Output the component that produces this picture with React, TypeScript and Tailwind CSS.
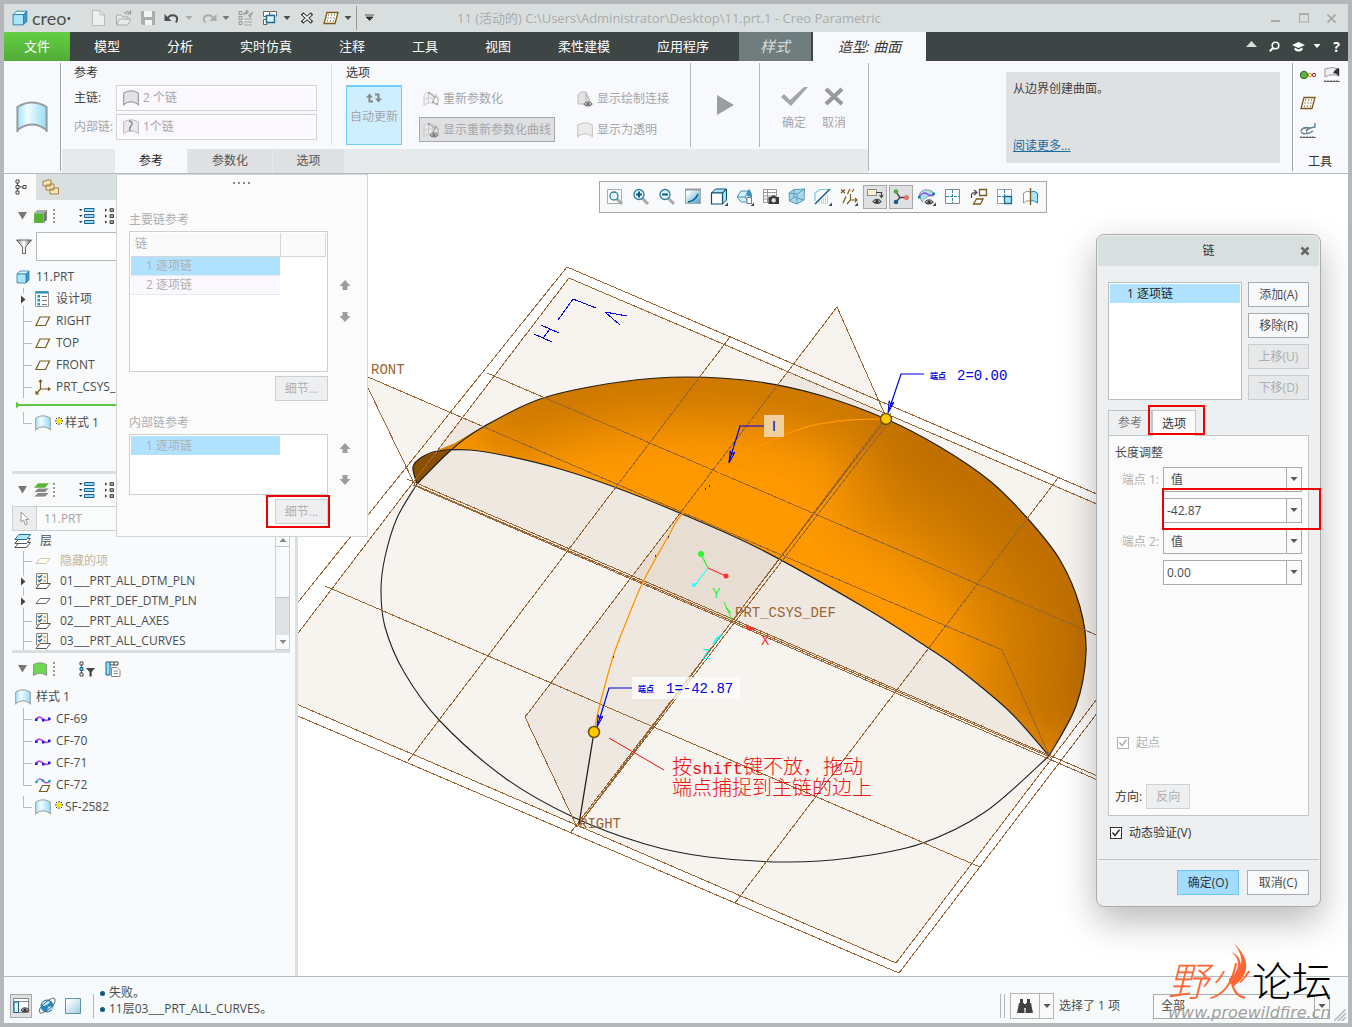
import { Fragment, type ReactNode } from "react"

type Point = [number, number]

const menuTabs = ["模型", "分析", "实时仿真", "注释", "工具", "视图", "柔性建模", "应用程序"]

// Catmull-Rom spline through the points, written as cubic segments
const spline = (points: Point[], start = "M") => {
    let d = `${start}${points[0][0]} ${points[0][1]}`
    for (let i = 0; i < points.length - 1; i++) {
        const p0 = points[i - 1] ?? points[i]
        const p1 = points[i]
        const p2 = points[i + 1]
        const p3 = points[i + 2] ?? p2
        d += `C${p1[0] + (p2[0] - p0[0]) / 6} ${p1[1] + (p2[1] - p0[1]) / 6} ${p2[0] - (p3[0] - p1[0]) / 6} ${p2[1] - (p3[1] - p1[1]) / 6} ${p2[0]} ${p2[1]}`
    }
    return d
}

const frontEdge: Point[] = [
    [417, 484], [413, 467], [422, 457], [438, 451], [470, 450], [507, 456], [560, 469], [617, 488],
    [682, 514], [760, 549], [867, 609], [930, 649], [960, 670], [1010, 712], [1049, 756],
]
const backEdge: Point[] = [
    [417, 484], [450, 451], [483, 427], [543, 398], [620, 382], [687, 377], [760, 382], [823, 396],
    [886, 419], [940, 447], [990, 481], [1028, 519], [1060, 560], [1080, 607], [1086, 653], [1076, 706], [1049, 756],
]
const baseCircle: Point[] = [
    [417, 484], [397, 518], [385, 557], [381, 590], [385, 627], [404, 672], [440, 721], [505, 778],
    [573, 817], [645, 844], [708, 857], [786, 862], [850, 858], [920, 844], [985, 812], [1049, 756],
]
const innerCurve: Point[] = [
    [886, 419], [850, 420], [810, 426], [773, 440], [730, 463], [682, 514], [668, 537], [643, 582],
    [625, 625], [613, 657], [599, 708], [594, 732],
]

const surfacePath = `${spline(frontEdge)}${spline([...backEdge].reverse(), "L")}Z`

const gridLines = [
    "M567 267L1223 548L899 973L230 687L567 267",
    "M569 278L1209 552L896 963L257 687L569 278",
    "M487 373L1150 658", "M325 586L980 867",
    "M407 479L1100 777", "M413 485L1100 781",
    "M730 337L408 761", "M891 413L571 832", "M889 422L578 826", "M1058 478L735 903",
    "M368 377L1002 650L1050 757L415 485L368 388",
    "M837 307L886 417L577 827L525 717Z",
]

const Svg = ({
    w = 16,
    h = w,
    box,
    className = "",
    children,
}: {
    w?: number
    h?: number
    box?: string
    className?: string
    children: ReactNode
}) => (
    <svg
        width={w}
        height={h}
        viewBox={box ?? `0 0 ${w} ${h}`}
        fill="none"
        aria-hidden="true"
        className={`shrink-0 ${className}`}
    >
        {children}
    </svg>
)

const SharedDefs = () => (
    <svg width="0" height="0" className="absolute" aria-hidden="true">
        <defs>
            <linearGradient id="sheen" x1="0" x2="1">
                <stop offset="0" stopColor="#9fe3fb" />
                <stop offset="0.35" stopColor="#f2fcff" />
                <stop offset="1" stopColor="#93dcf8" />
            </linearGradient>
            <linearGradient id="teal" x1="0" y1="0" x2="1" y2="1">
                <stop offset="0.2" stopColor="#f4fbfe" />
                <stop offset="1" stopColor="#3d9dc4" />
            </linearGradient>
            <linearGradient id="steel" x1="0" x2="1">
                <stop offset="0" stopColor="#888" />
                <stop offset="0.5" stopColor="#fff" />
                <stop offset="1" stopColor="#555" />
            </linearGradient>
        </defs>
    </svg>
)

const SurfaceIcon = ({ size = 16, fill = "url(#sheen)", stroke = "#999c9e" }) => (
    <Svg w={size} box="0 0 16 16">
        <path d="M.7 3Q8-1.400 15.300 3V15Q8 9 .7 15Z" fill={fill} />
        <path d="M.7 15.500V3Q8-1.400 15.300 3V15.500M.7 14.500Q8 9 15.300 14.500" stroke={stroke} />
    </Svg>
)

const PlaneIcon = ({ stroke = "#7a5c1e" }) => (
    <Svg w={16}>
        <path d="M5 4H14.500L10.500 12.500H1Z" stroke={stroke} strokeWidth="1.200" />
    </Svg>
)

const DotPlaneIcon = () => (
    <Svg w={16} h={14}>
        <path d="M4 1.500H15L12 12.500H1Z" fill="#fbf7ea" stroke="#7a5c1e" strokeWidth="1.300" />
        <path d="M5 4H13M4.500 7H12M4 10H11" stroke="#444" strokeDasharray="1 2" />
    </Svg>
)

const LayerPlaneIcon = ({ faded = false }) => (
    <Svg w={16}>
        <path d="M5 5.500H15L11 10.500H1Z" fill={faded ? "#fdfaf0" : "#fff"} stroke={faded ? "#cfc9b4" : "#666"} />
    </Svg>
)

const LayerListIcon = () => (
    <Svg w={16}>
        <path d="M1.500 .5H12.500V12H1.500Z" fill="#fdf3df" stroke="#8a8578" />
        <path d="M3 3L4.500 4.500L7 2M3 7L4.500 8.500L7 6" stroke="#0f6ea3" strokeWidth="1.300" />
        <path d="M8.500 4H11M8.500 8H11" stroke="#888" />
        <path d="M5 10.500H15.500L11.500 15.500H1Z" fill="#fff" stroke="#555" />
    </Svg>
)

const CurveIcon = () => (
    <Svg w={16}>
        <path d="M1 8.500Q4 4.500 7 7.500T15 8.500" stroke="#b84fd0" strokeWidth="1.800" />
        <path d="M0 7.500H2.500V10H0ZM7 8H9.500V10.500H7ZM13 6.500H15.500V9H13Z" fill="#1a1ae6" />
    </Svg>
)

const CurveOnPlaneIcon = () => (
    <Svg w={16}>
        <path d="M1 5.500Q4-.5 7.500 3.500T15 4.500" stroke="#9c4fd8" strokeWidth="1.300" />
        <circle cx="1.500" cy="5" r="1.300" fill="#0ab" />
        <circle cx="14.500" cy="4" r="1.300" fill="#0ab" />
        <circle cx="8" cy="3.500" r="1.300" fill="#0ab" />
        <path d="M7.500 8.500H14.500L12 14.500H4.500Z" fill="#fff" stroke="#7a5c1e" strokeWidth="1.200" />
    </Svg>
)

const CsysIcon = () => (
    <Svg w={16}>
        <path d="M5.500 1V10H15M5.500 10L1.500 14.500M4 3L5.500 1L7 3M13 8.500L15 10L13 11.500M1 12V15H4" stroke="#7a5c1e" strokeWidth="1.200" />
    </Svg>
)

const DesignItemsIcon = () => (
    <Svg w={14} h={16}>
        <path d="M.5 .5H13.500V15.500H.5Z" fill="#fff" stroke="#999" />
        <path d="M1 1.500H13" stroke="#1b8fc4" strokeWidth="2" />
        <path d="M2.500 4H5V6.500H2.500ZM2.500 8H5V10.500H2.500ZM2.500 12H5V14.500H2.500Z" fill="#1b8fc4" />
        <path d="M7 5.500H12M7 9.500H12M7 13.500H12" stroke="#777" />
    </Svg>
)

const CubeIcon = ({ size = 14, front = "#a8e6fb", top = "#e4f8ff", side = "#3f9cc2", stroke = "#2a7fa8" }) => (
    <Svg w={size} box="0 0 14 14">
        <path d="M1 4L4 1H13L10 4Z" fill={top} stroke={stroke} strokeWidth=".8" />
        <path d="M10 4L13 1V10L10 13Z" fill={side} stroke={stroke} strokeWidth=".8" />
        <path d="M1 4H10V13H1Z" fill={front} stroke={stroke} strokeWidth=".8" />
    </Svg>
)

const LayersIcon = ({ top = "#5cb338", low = "#888" }) => (
    <Svg w={17} h={16}>
        <path d="M5 10.500H16.500L12 15H.5Z" fill={low} stroke="#fff" strokeWidth=".8" />
        <path d="M5 6H16.500L12 10.500H.5Z" fill={low} stroke="#fff" strokeWidth=".8" />
        <path d="M5 1H16.500L12 6H.5Z" fill={top} stroke="#fff" strokeWidth=".5" />
    </Svg>
)

const OpenLayersIcon = () => (
    <Svg w={17} h={16}>
        <path d="M5 9.500H16.500L12.500 14.500H.8Z" fill="#fff" stroke="#555" />
        <path d="M5 5.500H16.500L12.500 10.500H.8Z" fill="#fff" stroke="#555" />
        <path d="M5 1.500H16.500L12.500 6.500H.8Z" fill="#b5e6f8" stroke="#2a6f93" />
    </Svg>
)

const ExpandListIcon = () => (
    <Svg w={16}>
        <path d="M5.500 .5H15V3.500H5.500ZM5.500 6.500H15V9.500H5.500ZM5.500 12.500H15V15.500H5.500Z" fill="#8fdcff" stroke="#17638b" />
        <path d="M0 1H3.500L1.700 3ZM0 7H3.500L1.700 9ZM0 13H3.500L1.700 15Z" fill="#333" />
    </Svg>
)

const CollapseListIcon = () => (
    <Svg w={9} h={16}>
        <path d="M5 .7H8.500V3.500H5ZM5 6.700H8.500V9.500H5ZM5 12.700H8.500V15.500H5Z" fill="#aaa" stroke="#444" />
        <path d="M0 .5L2.200 2L0 3.800ZM0 6.500L2.200 8L0 9.800ZM0 12.500L2.200 14L0 15.800Z" fill="#333" />
    </Svg>
)

const Caret = ({ className = "text-[#777]" }) => (
    <Svg w={8} h={5} className={className}>
        <path d="M.5 0H7.500L4 4Z" fill="currentColor" />
    </Svg>
)

const DotsHandle = () => (
    <Svg w={2} h={14}>
        <path d="M1 0V14" stroke="#999" strokeWidth="2" strokeDasharray="2 2" />
    </Svg>
)

const Star = () => (
    <Svg w={8} className="-mt-1">
        <path d="M4 0V8M0 4H8M1 1L7 7M7 1L1 7" stroke="#333" />
        <circle cx="4" cy="4" r="2.500" fill="#ffef00" />
    </Svg>
)

const Eye = ({ x = 0, y = 0 }) => (
    <g transform={`translate(${x} ${y})`}>
        <path d="M0 3Q4-1.500 8 3Q4 7 0 3Z" fill="#fff" stroke="#444" strokeWidth="1.100" />
        <circle cx="4" cy="3" r="1.800" fill="#333" />
    </g>
)

const Corner = () => <path d="M18 18H14.500L18 14.500Z" fill="#444" />

const Glass = ({ sign = "" }) => (
    <>
        <path d="M10 10L16 16" stroke="#aaa" strokeWidth="3" />
        <circle cx="7" cy="6.500" r="5" fill="#e9f7fd" stroke="#2d7fa5" strokeWidth="1.300" />
        <path d={sign} stroke="#0c5d86" strokeWidth="2" />
    </>
)

const viewTools: { name: string; active?: boolean; icon: ReactNode }[] = [
    {
        name: "重新调整",
        icon: (
            <>
                <path d="M1.500 1.500H15.500V15.500H1.500Z" fill="#fafafa" stroke="#aaa" />
                <path d="M11 11L16 16" stroke="#aaa" strokeWidth="3" />
                <circle cx="8" cy="8" r="4" fill="#e9f7fd" stroke="#2d7fa5" strokeWidth="1.300" />
            </>
        ),
    },
    { name: "放大", icon: <Glass sign="M4 6.500H10M7 3.500V9.500" /> },
    { name: "缩小", icon: <Glass sign="M4 6.500H10" /> },
    {
        name: "重画",
        icon: (
            <>
                <path d="M1.500 1.500H16.500V15.500H1.500Z" fill="url(#teal)" stroke="#a5a9ab" />
                <path d="M1 1.500H17" stroke="#999" strokeWidth="2" />
                <path d="M4 14Q11 13 14 6" stroke="#0d5f8a" strokeWidth="1.600" />
            </>
        ),
    },
    {
        name: "显示样式",
        icon: (
            <>
                <path d="M1.500 5L5.500 1H16.500L12.500 5ZM12.500 5L16.500 1V12L12.500 16Z" fill="#a8e2f8" stroke="#0d4f70" />
                <path d="M1.500 5H12.500V16H1.500Z" fill="#fff" stroke="#0d4f70" strokeWidth="1.200" />
                <Corner />
            </>
        ),
    },
    {
        name: "已保存方向",
        icon: (
            <>
                <path d="M1 9L5 3H12L15 9L12 14H5Z" fill="#d6f1fb" stroke="#4a95b5" />
                <path d="M1 9H9L12 3M9 9L12 14" stroke="#4a95b5" />
                <path d="M11 8Q11 3 13 1Q16 4 16 9Z" fill="#3c93bb" />
                <path d="M11 9.500H15.500V15.500H11Z" fill="#fff" stroke="#777" />
                <Corner />
            </>
        ),
    },
    {
        name: "视图管理器",
        icon: (
            <>
                <path d="M1.500 1.500H14.500V14.500H1.500ZM1.500 4.500H14.500M1.500 8H14.500M1.500 11H14.500M5.500 1.500V14.500" fill="#fff" stroke="#999" />
                <path d="M6.500 9H9L10 7.500H13L14 9H17V16H6.500Z" fill="#3a3a3a" />
                <circle cx="11.700" cy="12.300" r="2.200" fill="#ddd" />
            </>
        ),
    },
    {
        name: "透视图",
        icon: (
            <>
                <path d="M1 5L6 1.500L16.500 1L16 12L9 16L1.500 13Z" fill="#a8d8ea" stroke="#5b9db8" />
                <path d="M1 5L9 6L16.500 1M9 6V16M6 1.500V9L1.500 13M6 9L16 12" stroke="#5b9db8" />
            </>
        ),
    },
    {
        name: "截面",
        icon: (
            <>
                <path d="M1 16L16 1" stroke="#0d5f8a" strokeWidth="1.400" />
                <path d="M1 13V5L6 1.500H14" stroke="#7fc6e2" strokeWidth="1.200" />
                <path d="M5 15H15M7 13H15M9 11H15M11 9H15M13 7H15" stroke="#aaa" strokeDasharray="1 1" />
                <Corner />
            </>
        ),
    },
    {
        name: "基准显示",
        icon: (
            <>
                <path d="M1 1.500L5 5M5 1.500L1 5M10 1L7.500 6M6 8.500L3 15M14 1L12 4" stroke="#7a5c1e" strokeWidth="1.300" />
                <path d="M10.500 6V12H17M10.500 12L7 16M15 10L17 12L15 14" stroke="#7a5c1e" strokeWidth="1.200" />
                <Corner />
            </>
        ),
    },
    {
        name: "注释显示",
        active: true,
        icon: (
            <>
                <path d="M1.500 1.500H10.500V7.500H1.500Z" fill="#fdf1d4" stroke="#8a8a8a" />
                <path d="M10 4.500H15.500V9M13.500 7L15.500 9.500L17 7" stroke="#444" strokeWidth="1.200" />
                <Eye x={7} y={10.500} />
            </>
        ),
    },
    {
        name: "旋转中心",
        active: true,
        icon: (
            <>
                <path d="M4 4L8 9.500H14M8 9.500L4 14" stroke="#444" strokeWidth="1.300" />
                <circle cx="4" cy="3.500" r="2.300" fill="#4fae3f" />
                <circle cx="4" cy="14" r="2.300" fill="#1d5f8c" />
                <circle cx="14.500" cy="9.500" r="2.500" fill="#e2736a" />
            </>
        ),
    },
    {
        name: "曲线显示",
        icon: (
            <>
                <path d="M1 7Q4-1 14 3L16 8Q9 6 4 14Z" fill="#a9e2f4" stroke="#999" />
                <path d="M1 9Q5 3 9 6T16 6" stroke="#8e3fe0" strokeWidth="1.300" />
                <path d="M0 8H2.500V10.500H0ZM14.500 4.500H17V7H14.500Z" fill="#0f7aa8" />
                <Eye x={7} y={11} />
                <Corner />
            </>
        ),
    },
    {
        name: "显示所有视图",
        icon: (
            <>
                <path d="M1.500 1.500H15.500V15.500H1.500Z" fill="#fff" stroke="#888" />
                <path d="M8.500 2V15M2 8.500H15" stroke="#2f87ad" strokeDasharray="3 1" />
            </>
        ),
    },
    {
        name: "活动平面方向",
        icon: (
            <>
                <path d="M9.500 1.500H16.500V7.500H9.500ZM6.500 11H13L10.500 16H3.500Z" fill="#fff" stroke="#7a5c1e" strokeWidth="1.300" />
                <path d="M1.500 10V7Q1.500 4.500 6 4.500M4 2L7 4.500L4 7" stroke="#444" strokeWidth="1.200" />
            </>
        ),
    },
    {
        name: "显示下一视图",
        icon: (
            <>
                <path d="M1.500 1.500H15.500V15.500H1.500Z" fill="#fff" stroke="#999" />
                <path d="M8.500 2V8M2 8.500H8" stroke="#2f87ad" strokeWidth="1.200" strokeDasharray="3 1" />
                <path d="M8.500 8.500H15.500V15.500H8.500Z" fill="#a5e6fb" stroke="#1b6a92" strokeWidth="1.300" />
            </>
        ),
    },
    {
        name: "镜像",
        icon: (
            <>
                <path d="M8.500 4Q5 2 1.500 5V15Q5 11.500 8.500 13" fill="#fff" stroke="#999" />
                <path d="M8.500 4Q12 2 15.500 5V15Q12 11.500 8.500 13" fill="#a5e6fb" stroke="#1b8ab8" />
                <path d="M8.500 0V17" stroke="#7a5c1e" strokeWidth="1.400" />
            </>
        ),
    },
]

const TitleBar = () => (
    <header className="flex h-7 shrink-0 items-center bg-[#d9dfde] px-2 text-[#a9adad]">
        <div className="flex w-[79px] items-center gap-1 text-[#4b4f50]">
            <CubeIcon size={16} />
            <span className="text-lg leading-5 font-['Lato','Open_Sans',sans-serif]">
                creo<sup className="text-[8px]">•</sup>
            </span>
        </div>
        <div className="flex items-center gap-2">
            <button type="button" aria-label="新建" className="flex w-4">
                <Svg w={16}>
                    <path d="M1.500 .5H9L13.500 5V15.500H1.500Z" fill="#eef0f0" stroke="#bbb" />
                    <path d="M9 .5V5H13.500" stroke="#bbb" />
                </Svg>
            </button>
            <button type="button" aria-label="打开" className="flex">
                <Svg w={17} h={16}>
                    <path d="M1.500 15V5H6L7.500 7H13V9M1.500 15L4.500 9H16L12.500 15Z" fill="#e9ebeb" stroke="#aaa" />
                    <path d="M9 4Q12 0 14.500 3M15.500 0V4H11.500" stroke="#999" strokeWidth="1.200" />
                </Svg>
            </button>
            <button type="button" aria-label="保存" className="flex">
                <Svg w={16}>
                    <path d="M1 1H15V15H3L1 13Z" fill="#aaadad" />
                    <path d="M4 1H12V7H4ZM5 10H12V15H5Z" fill="#f2f3f3" />
                </Svg>
            </button>
            <button type="button" aria-label="撤销" className="flex items-center gap-[5px] text-[#4a4f50]">
                <Svg w={16}>
                    <path d="M3 9Q6 4 10.500 5.500T12 12.500" stroke="currentColor" strokeWidth="2" />
                    <path d="M.5 4V11H7.500Z" fill="currentColor" />
                </Svg>
                <Caret className="text-[#a9adad]" />
            </button>
            <button type="button" aria-label="重做" className="flex items-center gap-[5px] text-[#a9adad]">
                <Svg w={16}>
                    <path d="M13 9Q10 4 5.500 5.500T4 12.500" stroke="currentColor" strokeWidth="2" />
                    <path d="M15.500 4V11H8.500Z" fill="currentColor" />
                </Svg>
                <Caret />
            </button>
            <button type="button" aria-label="重新生成" className="flex">
                <Svg w={16}>
                    <path d="M1 1.500H4V4.500H1ZM1 6.500H4V9.500H1ZM1 11.500H4V14.500H1Z" stroke="#999" />
                    <path d="M6 9H14M6 12H14M6 15H14" stroke="#aaa" />
                    <path d="M6 5Q7 2 9.500 2M8 0L10 2L8 4M14.500 2Q14 5 11.500 5.500M13 3.500L11 5.500L13 7.500" stroke="#999" strokeWidth="1.400" />
                </Svg>
            </button>
            <button type="button" aria-label="窗口" className="flex items-center gap-[5px]">
                <Svg w={16}>
                    <path d="M1.500 1.500H7.500V6.500H1.500ZM8.500 2V1.500H14.500V6.500M1.500 9.500H5V14.500H1.500Z" fill="#fff" stroke="#666" />
                    <path d="M4.500 5.500H12.500V12.500H4.500Z" fill="#dff4fc" stroke="#1b6a92" strokeWidth="1.400" />
                </Svg>
                <Caret className="text-[#4a4f50]" />
            </button>
            <button type="button" aria-label="关闭窗口" className="ml-0.5 flex">
                <Svg w={12}>
                    <path d="M1 1.500L11 10.500M11 1.500L1 10.500" stroke="#333" strokeWidth="3.600" />
                    <path d="M2 2.400L10 9.600M10 2.400L2 9.600" stroke="#fff" strokeWidth="1.600" />
                </Svg>
            </button>
            <button type="button" aria-label="平面" className="ml-0.5 flex items-center gap-[5px]">
                <DotPlaneIcon />
                <Caret className="text-[#4a4f50]" />
            </button>
            <span className="-ml-1 h-6 w-px bg-[#999]" />
            <button type="button" aria-label="自定义" className="flex">
                <Svg w={9} h={8}>
                    <path d="M0 1H9M1 3H8L4.500 6.500Z" fill="#333" stroke="#333" strokeWidth=".8" />
                </Svg>
            </button>
        </div>
        <h1 className="ml-[83px] flex-1 truncate text-[13px] leading-5">
            11 (活动的) C:\Users\Administrator\Desktop\11.prt.1 - Creo Parametric
        </h1>
        <div className="flex items-center gap-[18px] pr-1">
            <button type="button" aria-label="最小化" className="flex">
                <Svg w={10}><path d="M0 8H9" stroke="#aaa" strokeWidth="2" /></Svg>
            </button>
            <button type="button" aria-label="最大化" className="flex">
                <Svg w={10}><path d="M.5 .5H9.500V9H.5ZM.5 1.500H9.500" stroke="#aaa" /></Svg>
            </button>
            <button type="button" aria-label="关闭" className="flex">
                <Svg w={9}><path d="M.5 .5L8.500 8.500M8.500 .5L.5 8.500" stroke="#aaa" strokeWidth="1.800" /></Svg>
            </button>
        </div>
    </header>
)

const MenuBar = () => (
    <nav className="flex h-[29px] shrink-0 items-stretch gap-px bg-[#3d4545] text-[13px] text-white">
        <button type="button" className="w-[66px] bg-linear-to-b from-[#63cf43] to-[#52ab37]">文件</button>
        {menuTabs.map((tab) => (
            <button type="button" key={tab} className="px-[23px]">{tab}</button>
        ))}
        <button type="button" className="ml-1.5 w-[72px] bg-[#6f7d7e] text-[15px] text-[#d5dcdc] italic">样式</button>
        <button type="button" className="ml-px w-[113px] bg-[#f8f9fc] text-sm text-[#333] italic">造型: 曲面</button>
        <div className="ml-auto flex items-center gap-3 pr-2">
            <button type="button" aria-label="最小化功能区" className="flex">
                <Svg w={11} h={7} className="-mt-1"><path d="M0 6L5.500 0L11 6Z" fill="#ddd" /></Svg>
            </button>
            <button type="button" aria-label="搜索" className="flex">
                <Svg w={11}>
                    <circle cx="6.500" cy="4.500" r="3.300" stroke="#fff" strokeWidth="1.600" />
                    <path d="M4 7L.8 10.200" stroke="#fff" strokeWidth="2" />
                </Svg>
            </button>
            <button type="button" aria-label="学习中心" className="flex items-center gap-2">
                <Svg w={13} h={10}>
                    <path d="M0 3L6.500 0L13 3L6.500 6Z" fill="#fff" />
                    <path d="M2.500 5.500V8Q6.500 11 10.500 8V5.500L6.500 7.500ZM1 4V9" fill="#fff" />
                </Svg>
                <Caret className="text-white" />
            </button>
            <button type="button" aria-label="帮助" className="text-sm leading-4 font-bold">?</button>
        </div>
    </nav>
)

const MeshIcon = ({ eye = false }) => (
    <Svg w={16} className="opacity-60">
        <path d="M1 4Q5-1 10 3V13Q5 10 1 15ZM1 9Q5 5 10 8M5.500 2V12" fill="#ededed" stroke="#b5b5b5" />
        <path d="M6 2L12 6L10 11L14 14M12 3L15 7V12" stroke="#888" strokeWidth="1.200" />
        <path d="M5 1H7V3H5ZM11 5H13V7H11ZM9 10H11V12H9ZM13 12H15V14H13Z" fill="#777" />
        {eye && <Eye x={7} y={10} />}
    </Svg>
)

const RibbonTool = ({ icon, label, active = false }: { icon: ReactNode; label: string; active?: boolean }) => (
    <button
        type="button"
        className={`flex h-[25px] items-center gap-1 self-start border px-[3px] ${
            active ? "border-[#a8a9aa] bg-[#dfe0e2]" : "border-transparent"
        }`}
    >
        {icon}
        {label}
    </button>
)

const Ribbon = () => (
    <section className="flex h-[113px] shrink-0 border-b border-[#b3bbbd] bg-[#f8f9fc] text-xs text-[#a5a6a8]">
        <div className="mt-0.5 mb-0.5 flex w-[57px] shrink-0 items-center justify-center border-r border-[#a3a6a8]">
            <SurfaceIcon size={32} />
        </div>
        <div className="flex w-[807px] shrink-0 flex-col pl-px">
            <div className="flex h-[88px]">
                <div className="flex w-[269px] flex-col gap-[3px] pl-3">
                    <h2 className="h-[21px] pt-0.5 leading-5 text-[#333]">参考</h2>
                    <div className="flex h-[26px] items-center">
                        <label htmlFor="main-chain" className="w-[42px] text-[#444]">主链:</label>
                        <div className="flex h-[26px] w-[201px] items-center gap-1 border border-[#cfd1d3] bg-[#faf7fe] px-1.5 ring-2 ring-white ring-inset">
                            <SurfaceIcon fill="#e3e3e5" stroke="#8f8f92" />
                            <input id="main-chain" readOnly value="2 个链" className="w-full min-w-0 bg-transparent outline-none" />
                        </div>
                    </div>
                    <div className="flex h-[26px] items-center">
                        <label htmlFor="inner-chain" className="w-[42px] whitespace-nowrap">内部链:</label>
                        <div className="flex h-[26px] w-[201px] items-center gap-1 border border-[#cfd1d3] bg-[#faf7fe] px-1.5 ring-2 ring-white ring-inset">
                            <Svg w={16}>
                                <path d="M.7 3Q8-1.400 15.300 3V14.500Q8 9 .7 14.500Z" fill="#eaeaec" stroke="#bbb" />
                                <path d="M6 2Q11 3 8 7T8 12" stroke="#888" strokeWidth="1.300" />
                            </Svg>
                            <input id="inner-chain" readOnly value="1个链" className="w-full min-w-0 bg-transparent outline-none" />
                        </div>
                    </div>
                </div>
                <div className="my-1 w-[359px] border-l border-[#dcdee0] pl-[14px]">
                    <h2 className="-mt-0.5 h-[22px] leading-5 text-[#333]">选项</h2>
                    <div className="flex">
                        <button type="button" className="flex h-[60px] w-14 flex-col items-center gap-1 border border-t-2 border-[#72cdfd] bg-[#cfefff] pt-1 whitespace-nowrap">
                            <Svg w={16} h={14}>
                                <path d="M3.500 10V6M12.500 4V8" stroke="#888" strokeWidth="2" />
                                <path d="M0 6.500H7L3.500 2.500ZM9 7.500H16L12.500 11.500Z" fill="#888" />
                                <path d="M2.500 10.500H7M9 3.500H13.500" stroke="#888" strokeWidth="2" />
                            </Svg>
                            自动更新
                        </button>
                        <div className="ml-[17px] flex w-[136px] flex-col gap-1.5 pt-px">
                            <RibbonTool icon={<MeshIcon />} label="重新参数化" />
                            <RibbonTool icon={<MeshIcon eye />} label="显示重新参数化曲线" active />
                        </div>
                        <div className="ml-[18px] flex flex-col gap-1.5 pt-px">
                            <RibbonTool
                                icon={
                                    <Svg w={16} className="opacity-70">
                                        <path d="M1 4L4 1H9L14 13H1Z" fill="#dcdcdd" stroke="#a5a5a5" />
                                        <path d="M9 1V12M9 4L15 13" stroke="#999" />
                                        <Eye x={7} y={10} />
                                    </Svg>
                                }
                                label="显示绘制连接"
                            />
                            <RibbonTool icon={<SurfaceIcon fill="#ebebeb" stroke="#c3c3c3" />} label="显示为透明" />
                        </div>
                    </div>
                </div>
                <div className="mt-0.5 mb-0.5 flex w-[69px] items-center justify-center border-l border-[#b3b5b7]">
                    <button type="button" aria-label="恢复" className="flex">
                        <Svg w={17} h={22}><path d="M0 1L17 11L0 21Z" fill="#9b9d9e" /></Svg>
                    </button>
                </div>
                <div className="mt-0.5 mb-0.5 flex flex-1 gap-3 border-l border-[#b3b5b7] pt-[22px] pl-5">
                    <button type="button" className="flex w-7 flex-col items-center gap-2">
                        <Svg w={28} h={22}><path d="M1 12L4 9L10 15L24 2L28 2L11 21Z" fill="#a3a5a6" /></Svg>
                        确定
                    </button>
                    <button type="button" className="flex w-7 flex-col items-center gap-2">
                        <Svg w={20} h={22}><path d="M2 4L18 19M18 4L2 19" stroke="#97999a" strokeWidth="4" /></Svg>
                        取消
                    </button>
                </div>
            </div>
            <div className="flex h-6 bg-[#e8e9eb] pl-[53px] text-[#555]">
                <button type="button" className="w-[72px] bg-[#f8f9fc] text-[#222]">参考</button>
                <button type="button" className="ml-px w-[84px] bg-[#dfe0e2]">参数化</button>
                <button type="button" className="ml-px w-[71px] bg-[#dfe0e2]">选项</button>
            </div>
        </div>
        <div className="my-0.5 flex flex-1 justify-end border-l border-[#b3b5b7] pr-3">
            <div className="mt-[9px] flex h-[91px] w-[274px] flex-col justify-between bg-[#dfe0e2] px-[7px] py-[9px] text-[#444]">
                <p>从边界创建曲面。</p>
                <a href="#more" className="text-[#1a6ba0] underline">阅读更多...</a>
            </div>
        </div>
        <div className="my-0.5 flex w-14 shrink-0 flex-col border-l border-[#a3a6a8] pt-1 pl-[7px] text-[#333]">
            <div className="grid grid-cols-2 gap-y-[13px]">
                <Svg w={16}>
                    <path d="M6 8H15" stroke="#b33" />
                    <circle cx="4" cy="8" r="3.700" fill="#5fae4a" stroke="#2e6b25" />
                    <circle cx="10" cy="8" r="1.700" fill="#fff" stroke="#c90" />
                    <circle cx="14" cy="8" r="1.700" fill="#fff" stroke="#b22" />
                </Svg>
                <Svg w={16}>
                    <path d="M1 2Q8-1 15 2V9Q8 6 1 10Z" fill="#f1f1f1" stroke="#999" />
                    <path d="M9 6Q11 2 15 1V9Q12 6 9 6Z" fill="#333" />
                    <path d="M0 14.500H16M1 13V15M4 13V15M7 13V15M10 13V15M13 13V15" stroke="#666" />
                </Svg>
                <DotPlaneIcon />
                <span />
                <Svg w={16}>
                    <path d="M15 0V4Q8 5 6 8M1 8Q3 3 10 5M2 10Q8 12 13 8" stroke="#5a8298" strokeWidth="1.400" />
                    <circle cx="4" cy="8" r="3" stroke="#888" />
                    <path d="M0 14.500H16M1 13V15M4 13V15M7 13V15M10 13V15M13 13V15" stroke="#666" />
                </Svg>
            </div>
            <span className="mt-auto pr-2 pb-px text-center">工具</span>
        </div>
    </section>
)

const Guide = ({ kind, height }: { kind: "tee" | "end" | "arrow" | "none"; height: number }) => {
    const mid = height / 2 + 0.5
    return (
        <Svg w={19} h={height}>
            {kind === "tee" && <path d={`M9.500 0V${height}M9.500 ${mid}H18`} stroke="#b9bcbe" />}
            {kind === "end" && <path d={`M9.500 0V${mid}H18`} stroke="#b9bcbe" />}
            {kind === "arrow" && (
                <>
                    <path d={`M9.500 0V${mid - 6}M9.500 ${mid + 6}V${height}`} stroke="#b9bcbe" />
                    <path d={`M7 ${mid - 4}L11.500 ${mid}L7 ${mid + 4}Z`} fill="#444" />
                </>
            )}
        </Svg>
    )
}

const modelTree: { label: string; kind: "tee" | "end" | "arrow"; icon: ReactNode }[] = [
    { label: "设计项", kind: "arrow", icon: <DesignItemsIcon /> },
    { label: "RIGHT", kind: "tee", icon: <PlaneIcon /> },
    { label: "TOP", kind: "tee", icon: <PlaneIcon /> },
    { label: "FRONT", kind: "tee", icon: <PlaneIcon /> },
    { label: "PRT_CSYS_DEF", kind: "tee", icon: <CsysIcon /> },
]

const layerTree: { label: string; kind: "tee" | "arrow"; icon: ReactNode; faded?: boolean }[] = [
    { label: "隐藏的项", kind: "tee", icon: <LayerPlaneIcon faded />, faded: true },
    { label: "01___PRT_ALL_DTM_PLN", kind: "arrow", icon: <LayerListIcon /> },
    { label: "01___PRT_DEF_DTM_PLN", kind: "arrow", icon: <LayerPlaneIcon /> },
    { label: "02___PRT_ALL_AXES", kind: "tee", icon: <LayerListIcon /> },
    { label: "03___PRT_ALL_CURVES", kind: "tee", icon: <LayerListIcon /> },
]

const styleTree: { label: string; kind: "tee" | "end"; icon: ReactNode; star?: boolean }[] = [
    { label: "CF-69", kind: "tee", icon: <CurveIcon /> },
    { label: "CF-70", kind: "tee", icon: <CurveIcon /> },
    { label: "CF-71", kind: "tee", icon: <CurveIcon /> },
    { label: "CF-72", kind: "end", icon: <CurveOnPlaneIcon /> },
    { label: "SF-2582", kind: "end", icon: <SurfaceIcon />, star: true },
]

const TreeHeader = ({ icon, children }: { icon: ReactNode; children: ReactNode }) => (
    <div className="flex h-8 shrink-0 items-center pl-[14px]">
        <Svg w={9} h={8}><path d="M0 0H9L4.500 7.500Z" fill="#777" /></Svg>
        <span className="ml-1.5 flex w-5">{icon}</span>
        <DotsHandle />
        <div className="ml-6 flex items-center gap-[10px]">{children}</div>
    </div>
)

const Sidebar = () => (
    <aside className="flex w-[294px] shrink-0 flex-col overflow-hidden border-r-[3px] border-[#dae0e0] bg-[#f8fafb] text-xs text-[#4a4d4f]">
        <div className="flex h-[26px] shrink-0 bg-[#dae0df]">
            <button type="button" aria-label="模型树" className="flex w-8 items-center justify-center bg-[#f8fafb] pl-0.5">
                <Svg w={12} h={16}>
                    <path d="M2.500 4V12M2.500 8H8" stroke="#555" />
                    <path d="M1 1H4V4H1ZM1 6.500H4V9.500H1ZM1 12H4V15H1ZM8 6.500H11V9.500H8Z" fill="#fff" stroke="#444" />
                </Svg>
            </button>
            <button type="button" aria-label="文件夹" className="ml-1.5 flex items-center">
                <Svg w={18} h={16}>
                    <path d="M1 2H4L5 1H9V7H1ZM4 6H7L8 5H12V11H4ZM8 10H11L12 9H16.500V15H8Z" fill="#fbe3b4" stroke="#a3814b" />
                </Svg>
            </button>
        </div>
        <div className="h-[271px] shrink-0">
            <TreeHeader icon={<CubeIcon size={15} front="#57b336" top="#aaa" side="#777" stroke="none" />}>
                <ExpandListIcon />
                <CollapseListIcon />
            </TreeHeader>
            <div className="flex h-[29px] items-center pl-3">
                <Svg w={16}>
                    <path d="M.5 1H15.500L9.500 8V14.500H6.500V8Z" fill="url(#steel)" stroke="#666" />
                </Svg>
                <input aria-label="过滤" className="ml-1 h-[29px] min-w-0 flex-1 border border-[#b0b9ba] bg-white px-1" />
            </div>
            <div className="mt-[5px] flex h-[22px] items-center gap-1.5 pl-3">
                <CubeIcon />
                11.PRT
            </div>
            {modelTree.map((item) => (
                <div key={item.label} className="flex h-[22px] items-center pl-[10px]">
                    <Guide kind={item.kind} height={22} />
                    <span className="flex w-[23px] items-center pl-0.5">{item.icon}</span>
                    {item.label}
                </div>
            ))}
            <Svg w={270} h={14} className="ml-3">
                <path d="M2 7H270" stroke="#5fc741" strokeWidth="2" />
                <path d="M0 3.500L4 7L0 10.500Z" fill="#5fc741" />
            </Svg>
            <div className="flex h-[22px] items-center pl-[10px]">
                <Guide kind="end" height={22} />
                <span className="flex w-[22px] pl-0.5"><SurfaceIcon /></span>
                <Star />
                <span className="pl-0.5">样式 1</span>
            </div>
        </div>
        <div className="mr-[5px] ml-2 h-[3px] shrink-0 bg-[#dae0df]" />
        <TreeHeader icon={<LayersIcon />}>
            <ExpandListIcon />
            <CollapseListIcon />
        </TreeHeader>
        <div className="mr-[5px] ml-2 flex h-[25px] shrink-0 border border-[#cdd0d2]">
            <button type="button" aria-label="选取" className="flex w-6 items-center justify-center border-r border-[#cdd0d2] bg-[#ecedee]">
                <Svg w={10} h={15}><path d="M1 1V11L3.500 9L5.500 14L7.500 13L5.500 8.500H9Z" fill="#fff" stroke="#999" /></Svg>
            </button>
            <input aria-label="层模型" readOnly value="11.PRT" className="min-w-0 flex-1 bg-[#fafbfb] px-[7px] text-[#a5a6a8] outline-none" />
        </div>
        <div className="mr-[5px] flex h-[119px] shrink-0 overflow-hidden">
            <div className="flex-1">
                <div className="flex h-5 items-center pl-[10px]">
                    <OpenLayersIcon />
                    <span className="pl-[9px]">层</span>
                </div>
                {layerTree.map((item) => (
                    <div key={item.label} className={`flex h-5 items-center pl-[10px] ${item.faded ? "text-[#c0b8a0]" : ""}`}>
                        <Guide kind={item.kind} height={20} />
                        <span className="flex w-[27px] pl-0.5">{item.icon}</span>
                        {item.label}
                    </div>
                ))}
            </div>
            <div className="flex w-[15px] flex-col border border-[#cdd0d2] bg-[#dfe1e3]">
                <div className="flex h-[14px] items-center justify-center bg-[#f8fafb]">
                    <Caret className="rotate-180 text-[#888]" />
                </div>
                <div className="h-[52px] border-y border-[#c3c6c8] bg-[#f8fafb]" />
                <div className="mt-auto flex h-[14px] items-center justify-center bg-[#f8fafb]">
                    <Caret className="text-[#888]" />
                </div>
            </div>
        </div>
        <div className="mr-[5px] ml-2 h-[3px] shrink-0 bg-[#dae0df]" />
        <TreeHeader
            icon={
                <Svg w={14}><path d="M.5 2.500Q7-1 13.500 2.500V13.500Q7 9 .5 13.500Z" fill="#6fd851" stroke="#777" strokeWidth=".7" /></Svg>
            }
        >
            <Svg w={16}>
                <path d="M2.500 4V12" stroke="#555" />
                <path d="M1 1H4V4H1ZM1 12H4V15H1Z" fill="#fff" stroke="#444" />
                <path d="M1 6.500H4V9.500H1Z" fill="#5cc8f5" stroke="#17638b" />
                <path d="M7 7H16L12.700 11V15.500H10.500V11Z" fill="#444" />
            </Svg>
            <Svg w={16}>
                <path d="M1 1H5V14H1Z" fill="#8fdcff" stroke="#17638b" />
                <path d="M5 1H13V4H5M9 1V4" stroke="#444" />
                <path d="M6.500 6.500H12L15 9.500V15.500H6.500ZM8.500 10H13M8.500 12.500H13" fill="#fff" stroke="#888" />
            </Svg>
        </TreeHeader>
        <div className="mt-px flex h-[22px] items-center gap-[5px] pl-[11px]">
            <SurfaceIcon />
            样式 1
        </div>
        {styleTree.map((item) => (
            <div key={item.label} className="flex h-[22px] items-center pl-[10px]">
                <Guide kind={item.kind} height={22} />
                <span className={`flex pl-0.5 ${item.star ? "w-[22px]" : "w-[23px]"}`}>{item.icon}</span>
                {item.star && <Star />}
                <span className={item.star ? "pl-0.5" : ""}>{item.label}</span>
            </div>
        ))}
    </aside>
)

const MoveArrows = () => (
    <div className="ml-[11px] flex flex-col gap-5 pb-0.5">
        <button type="button" aria-label="上移" className="flex">
            <Svg w={12}><path d="M6 1L11.500 7H8.500V11H3.500V7H.5Z" fill="#9b9d9e" /></Svg>
        </button>
        <button type="button" aria-label="下移" className="flex">
            <Svg w={12}><path d="M6 11L11.500 5H8.500V1H3.500V5H.5Z" fill="#9b9d9e" /></Svg>
        </button>
    </div>
)

const ChainPanel = () => (
    <section className="absolute top-0 left-[112px] flex h-[363px] w-[252px] flex-col border border-[#d2d5d6] bg-[#fbfbfb] px-3 text-xs text-[#aeafb1]">
        <div className="flex h-[33px] shrink-0 justify-center pt-[7px]">
            <Svg w={18} h={2}><path d="M0 1H18" stroke="#888" strokeWidth="2" strokeDasharray="2 3" /></Svg>
        </div>
        <h2 className="h-[23px] shrink-0 leading-6">主要链参考</h2>
        <div className="flex items-center">
            <div className="h-[141px] w-[199px] border border-[#cdd0d2] bg-white p-px">
                <table className="w-[195px] table-fixed border-collapse text-left">
                    <thead>
                        <tr className="h-[23px] bg-[#fafafa]">
                            <th scope="col" className="w-[149px] border-r border-b border-[#d4d6d8] px-1 font-normal">链</th>
                            <th scope="col" className="border-r border-b border-[#d4d6d8]" aria-label="状态" />
                        </tr>
                    </thead>
                    <tbody>
                        {["1 逐项链", "2 逐项链"].map((chain, index) => (
                            <tr key={chain} className="h-[19px]">
                                <td className={`border-b border-[#e5eaee] pl-[15px] leading-[18px] ${index === 0 ? "bg-[#b0e2ff]" : "bg-[#faf7fe]"}`}>
                                    {chain}
                                </td>
                                <td />
                            </tr>
                        ))}
                    </tbody>
                </table>
            </div>
            <MoveArrows />
        </div>
        <button type="button" className="mt-1 mr-[27px] h-[25px] w-[53px] shrink-0 self-end border border-[#cdd0d2] bg-[#eeeff0]">细节...</button>
        <h2 className="mt-[10px] h-[23px] shrink-0 leading-6">内部链参考</h2>
        <div className="flex items-center">
            <ul className="h-[61px] w-[199px] border border-[#cdd0d2] bg-white p-px">
                <li className="h-[19px] w-[149px] bg-[#b0e2ff] pl-[15px] leading-[19px]">1 逐项链</li>
            </ul>
            <MoveArrows />
        </div>
        <div className="relative mt-1 mr-[27px] self-end">
            <button type="button" className="block h-[25px] w-[53px] border border-[#cdd0d2] bg-[#eeeff0]">细节...</button>
            <span className="absolute -inset-y-1 -right-0.5 -left-[9px] border-2 border-[#f00000]" />
        </div>
    </section>
)

const ViewToolbar = () => (
    <div role="toolbar" className="absolute inset-x-0 top-[7px] flex justify-center">
        <div className="flex h-8 items-center gap-[2px] border border-[#a2a4a6] bg-[#f8f9fb] px-[3px]">
            {viewTools.map((tool) => (
                <button
                    type="button"
                    key={tool.name}
                    aria-label={tool.name}
                    className={`flex size-6 items-center justify-center border ${
                        tool.active ? "border-[#a8a9aa] bg-[#dfe0e2]" : "border-transparent"
                    }`}
                >
                    <Svg w={18}>{tool.icon}</Svg>
                </button>
            ))}
        </div>
    </div>
)

const Leader = ({ d, tip, angle }: { d: string; tip: Point; angle: number }) => (
    <>
        <path d={d} stroke="#0000e0" strokeWidth="1.200" />
        <path
            d="M0 0L-2.500-12L0-9L2.500-12Z"
            transform={`translate(${tip[0]} ${tip[1]}) rotate(${angle})`}
            stroke="#0000e0"
        />
    </>
)

const Scene = () => (
    <svg
        viewBox="298 174 1050 802"
        preserveAspectRatio="xMinYMin slice"
        fill="none"
        className="block size-full font-['Liberation_Mono','Noto_Sans_CJK_SC',monospace]"
    >
        <defs>
            <clipPath id="surface-clip"><path d={surfacePath} /></clipPath>
            <filter id="shade" filterUnits="userSpaceOnUse" x="300" y="200" width="1000" height="750">
                <feGaussianBlur stdDeviation="30" />
            </filter>
        </defs>

        {/* datum planes */}
        <g fill="#996633" fillOpacity=".08">
            <path d="M569 278L1209 552L896 963L257 687Z" />
            <path d="M368 377L1002 650L1050 757L415 485L368 388Z" />
            <path d="M837 307L886 417L577 827L525 717Z" />
        </g>
        <path d={spline(baseCircle)} stroke="#222" strokeWidth="1.100" />

        {/* boundary surface */}
        <path d={surfacePath} fill="#ff9900" />
        <g clipPath="url(#surface-clip)">
            <g filter="url(#shade)">
                <path d={spline(backEdge.slice(2))} stroke="#b06600" strokeWidth="76" strokeOpacity=".75" />
                <path d={spline(backEdge.slice(8))} stroke="#b86c00" strokeWidth="210" strokeOpacity=".65" />
            </g>
        </g>
        <path d="M438 450L455 443L470 434L483 427L450 451Z" fill="#d98200" />
        <path d={`${spline(frontEdge.slice(0, 4))}L450 451L417 484Z`} fill="#8a4f00" />
        <path d={`${spline(frontEdge)}${spline(backEdge)}`} stroke="#222" strokeWidth="1.200" />

        <g stroke="#996633" shapeRendering="crispEdges">
            {gridLines.map((d) => (
                <path key={d} d={d} />
            ))}
        </g>
        <path d={spline(innerCurve)} stroke="#ff9600" strokeWidth="1.300" />
        <path d="M594 732L579 824" stroke="#222" strokeWidth="1.300" />
        <path d="M705 489H706M709 486H710M668 537H669M655 556H656M613 657H614" stroke="#111" strokeWidth="1.500" />

        {/* sketch orientation marks */}
        <path
            d="M558 320L573 299L596 308M605 312L627 316M605 312L620 325M541 325L559 333M534 334L552 342M550 329L543 338"
            stroke="#0000e0"
            shapeRendering="crispEdges"
        />

        <g fontSize="14" fill="#996633">
            <text x="371" y="374">RONT</text>
            <text x="735" y="617">PRT_CSYS_DEF</text>
            <text x="579" y="828">RIGHT</text>
        </g>

        {/* spin centre and coordinate system */}
        <path d="M708 568L701 554" stroke="#2df52d" strokeWidth="1.200" />
        <path d="M708 568L726 576" stroke="#ff3030" strokeWidth="1.200" />
        <path d="M708 568L695 585" stroke="#2ff" strokeWidth="1.200" />
        <circle cx="701" cy="554" r="3" fill="#2df52d" />
        <circle cx="726" cy="576" r="2.500" fill="#ff3030" />
        <circle cx="694" cy="585" r="2" fill="#2ff" />
        <path d="M732 620L724 602M731 613L726 607L728 611Z" fill="#2df52d" stroke="#2df52d" />
        <path d="M746 626L755 629L748 630Z" fill="#ff3030" stroke="#ff3030" />
        <path d="M722 634L713 645L716 638Z" fill="#2ff" stroke="#2ff" />
        <g fontSize="14">
            <text x="712" y="598" fill="#2df52d">Y</text>
            <text x="761" y="645" fill="#ff3030">X</text>
            <text x="702" y="659" fill="#22e6ee">Z</text>
        </g>

        {/* handles and their labels */}
        <path d="M632 677H740V699H632Z" fill="#fff" fillOpacity=".75" />
        <path d="M764 415H784V437H764Z" fill="#f3cf9f" />
        <Leader d="M764 426H740L729 462" tip={[729, 463]} angle={17} />
        <Leader d="M924 374H901L889 410" tip={[888, 413]} angle={17} />
        <Leader d="M632 688H609L598 724" tip={[597, 727]} angle={17} />
        <g fill="#0000e0" fontSize="14">
            <text x="772" y="431" className="font-['Liberation_Sans',sans-serif]">I</text>
            <text x="930" y="379" fontSize="8" fontWeight="700">端点</text>
            <text x="957" y="380">2=0.00</text>
            <text x="638" y="692" fontSize="8" fontWeight="700">端点</text>
            <text x="666" y="693">1=-42.87</text>
        </g>
        <g fill="#ffc800" stroke="#6b5500" strokeWidth="1.500">
            <circle cx="886" cy="419" r="5.500" />
            <circle cx="594" cy="732" r="5.500" />
        </g>

        {/* instructor's note */}
        <path d="M609 738L664 770" stroke="#f01010" />
        <g fill="#f01010" fontSize="20" fontWeight="300">
            <text x="672" y="774">
                按<tspan fontSize="17">shift</tspan>键不放，拖动
            </text>
            <text x="672" y="795">端点捕捉到主链的边上</text>
        </g>
    </svg>
)

const SelectBox = ({ id, value }: { id: string; value: string }) => (
    <div className="flex h-[25px] w-[139px] items-stretch border border-[#a9abad] bg-[#fafafa]">
        <select id={id} defaultValue={value} className="min-w-0 flex-1 appearance-none bg-transparent px-[7px] outline-none">
            <option>{value}</option>
        </select>
        <span className="flex w-[15px] items-center justify-center border-l border-[#a9abad]"><Caret className="text-[#555]" /></span>
    </div>
)

const ComboBox = ({ label, value }: { label: string; value: string }) => (
    <div className="flex h-[25px] w-[139px] items-stretch border border-[#a9abad] bg-white">
        <input aria-label={label} defaultValue={value} className="min-w-0 flex-1 px-[3px] outline-none" />
        <button type="button" aria-label={`${label} 列表`} className="flex w-[15px] items-center justify-center border-l border-[#a9abad] bg-[#fafafa]">
            <Caret className="text-[#555]" />
        </button>
    </div>
)

const CheckBox = ({ id, label, disabled = false }: { id: string; label: string; disabled?: boolean }) => (
    <div className={`flex items-center gap-[7px] ${disabled ? "text-[#b0b1b3]" : "text-[#333]"}`}>
        <span className="grid size-3 place-items-center">
            <input
                id={id}
                type="checkbox"
                defaultChecked
                disabled={disabled}
                className="col-start-1 row-start-1 size-3 appearance-none border border-current bg-white"
            />
            <Svg w={10} h={8} className="pointer-events-none col-start-1 row-start-1">
                <path d="M1.500 3.500L4 6.500L8.500 .8" stroke="currentColor" strokeWidth="1.600" />
            </Svg>
        </span>
        <label htmlFor={id}>{label}</label>
    </div>
)

const ChainDialog = () => (
    <section
        role="dialog"
        aria-label="链"
        className="absolute top-[60px] right-[27px] flex w-[225px] flex-col rounded-lg border border-[#a9adae] bg-[#edeff1] text-xs text-[#4a4a4c] shadow-[0_14px_36px_rgba(0,0,0,0.28)]"
    >
        <header className="m-px flex h-[30px] items-center justify-end rounded-t-md bg-[#d9dfde] pr-2">
            <h2 className="flex-1 pl-5 text-center text-[#333]">链</h2>
            <button type="button" aria-label="关闭" className="flex">
                <Svg w={12}><path d="M2.500 2.500L9.500 9.500M9.500 2.500L2.500 9.500" stroke="#666" strokeWidth="2.500" /></Svg>
            </button>
        </header>
        <div className="px-[11px] pt-[15px]">
            <div className="flex gap-1.5">
                <ul className="h-[118px] w-[134px] border border-[#b9bec1] bg-white p-px">
                    <li className="h-[19px] bg-[#b0e2ff] pl-[17px] leading-[19px] text-[#222]">1 逐项链</li>
                </ul>
                <div className="flex w-[61px] flex-col gap-1.5">
                    <button type="button" className="h-[25px] border border-[#a9abad] bg-[#f8f9fa]">添加(A)</button>
                    <button type="button" className="h-[25px] border border-[#a9abad] bg-[#f8f9fa]">移除(R)</button>
                    <button type="button" disabled className="h-[25px] border border-[#c9cbcd] bg-[#e6e8e9] text-[#adaeb0]">上移(U)</button>
                    <button type="button" disabled className="h-[25px] border border-[#c9cbcd] bg-[#e6e8e9] text-[#adaeb0]">下移(D)</button>
                </div>
            </div>
            <div className="relative mt-[10px] flex h-[25px] w-[88px]">
                <button type="button" className="w-11 border border-b-0 border-[#c0c5c8] text-[#777]">参考</button>
                <button type="button" className="z-10 -mb-px w-11 border border-b-0 border-[#c0c5c8] bg-[#fbfbfb] text-[#333]">选项</button>
                <span className="absolute -top-[5px] -right-[9px] bottom-0 left-10 z-10 border-2 border-[#f00000]" />
            </div>
            <div className="flex h-[381px] w-[201px] flex-col border border-[#c0c5c8] bg-[#fbfbfb] px-1.5">
                <h3 className="mt-2 mb-[5px] leading-[18px]">长度调整</h3>
                <div className="relative grid grid-cols-[48px_139px] items-center gap-y-1.5">
                    <label htmlFor="end-1" className="pr-1 text-right text-[#b0b1b3]">端点 1:</label>
                    <SelectBox id="end-1" value="值" />
                    <span />
                    <ComboBox label="端点 1 值" value="-42.87" />
                    <label htmlFor="end-2" className="pr-1 text-right text-[#b0b1b3]">端点 2:</label>
                    <SelectBox id="end-2" value="值" />
                    <span />
                    <ComboBox label="端点 2 值" value="0.00" />
                    <span className="absolute top-[21px] left-[47px] h-[42px] w-[159px] border-2 border-[#f00000]" />
                </div>
                <div className="mt-auto mb-[33px] pl-0.5"><CheckBox id="start-point" label="起点" disabled /></div>
                <div className="mb-1.5 flex items-center gap-1 text-[#333]">
                    方向:
                    <button type="button" disabled className="h-[25px] w-11 border border-[#d0d2d4] bg-[#eeeff0] text-[#adaeb0]">反向</button>
                </div>
            </div>
            <div className="mt-[9px] mb-[18px] pl-0.5"><CheckBox id="dynamic" label="动态验证(V)" /></div>
        </div>
        <footer className="mx-px flex justify-end gap-2 border-t border-[#c0c5c8] px-[10px] pt-[10px] pb-[11px]">
            <button type="button" className="h-[25px] w-[62px] border border-[#6cc6f5] bg-[#a2ddff] text-[#333]">确定(O)</button>
            <button type="button" className="h-[25px] w-[62px] border border-[#a9abad] bg-[#f8f9fa]">取消(C)</button>
        </footer>
    </section>
)

const StatusBar = () => (
    <footer className="flex h-[47px] shrink-0 items-start border-t border-[#b3bbbd] bg-[#f7fafa] pr-[18px] pl-1.5 text-xs text-[#4a4d4f]">
        <div className="mt-[17px] flex items-center">
            <button type="button" aria-label="导航器" className="flex h-6 w-[22px] items-center justify-center border border-[#a8a9aa] bg-[#dfe0e2]">
                <Svg w={17} h={16}>
                    <path d="M.5 .5H15.500V14.500H.5ZM.5 3.500H15.500" fill="#fff" stroke="#888" />
                    <path d="M1 4H5.500V14.500H1Z" fill="#e2f6fd" stroke="#17638b" />
                    <Eye x={8} y={9} />
                </Svg>
            </button>
            <button type="button" aria-label="浏览器" className="ml-[6px] flex">
                <Svg w={18}>
                    <circle cx="9" cy="9" r="6.500" fill="#2488bd" />
                    <path d="M4 6Q8 2 12 5Q9 9 5 9ZM10 10Q14 8 15 11Q12 15 9 14Z" fill="#bfe6f7" />
                    <path d="M2 16Q-1 13 7 6T17 2Q18 7 11 12T2 16Z" stroke="#666" />
                </Svg>
            </button>
            <button type="button" aria-label="全屏" className="ml-[9px] flex">
                <Svg w={17}><path d="M.5 .5H15.500V15.500H.5Z" fill="url(#teal)" fillOpacity=".5" stroke="#5e93ab" /></Svg>
            </button>
            <span className="ml-[11px] h-6 w-px bg-[#b3b5b7]" />
        </div>
        <ul className="mt-2 flex flex-col pl-1.5 leading-4">
            {["失败。", "11层03___PRT_ALL_CURVES。"].map((message) => (
                <li key={message} className="flex items-center gap-1">
                    <span className="size-[5px] rounded-full bg-[#12597f]" />
                    {message}
                </li>
            ))}
        </ul>
        <div className="mt-4 ml-auto flex items-center">
            <span className="mr-[5px] h-6 w-[5px] border-x border-[#b3b5b7]" />
            <button type="button" aria-label="查找" className="flex h-[26px] w-[44px] items-center border border-[#b3b5b7] bg-[#fafafa]">
                <span className="flex flex-1 justify-center">
                    <Svg w={18} h={16}>
                        <path d="M4 1H7V5H4ZM11 1H14V5H11ZM3 5H8L8.500 15H1ZM10 5H15L17 15H9.500ZM7 6H11V10H7Z" fill="#3f4344" />
                    </Svg>
                </span>
                <span className="flex h-full w-[14px] items-center justify-center border-l border-[#b3b5b7]"><Caret className="text-[#555]" /></span>
            </button>
            <span className="w-[99px] pl-[5px]">选择了 1 项</span>
            <div className="flex h-[25px] w-[177px] items-stretch border border-[#a9abad] bg-[#fafafa]">
                <select aria-label="选择过滤器" defaultValue="全部" className="flex-1 appearance-none bg-transparent px-[7px] outline-none">
                    <option>全部</option>
                </select>
                <span className="flex w-[15px] items-center justify-center border-l border-[#a9abad]"><Caret className="text-[#555]" /></span>
            </div>
        </div>
        <Svg w={12} className="-mr-4 mt-auto ml-1 mb-0.5">
            <path d="M0 12L12 0M4 12L12 4M8 12L12 8" stroke="#b3b5b7" strokeWidth="1.500" />
        </Svg>
    </footer>
)

const Watermark = () => (
    <div className="pointer-events-none absolute right-2 bottom-0 w-[172px]">
        <div className="flex items-end text-[40px] leading-[44px] font-light">
            <span className="text-[#ff6633] italic">野火</span>
            <span className="ml-1 text-black">论坛</span>
        </div>
        <p className="text-base leading-5 whitespace-nowrap text-[#a0a0a0] italic font-['DejaVu_Sans',sans-serif]">www.proewildfire.cn</p>
        <svg width="20" height="46" viewBox="0 0 20 46" className="absolute -top-4 left-[60px]" aria-hidden="true">
            <path d="M6 0Q20 14 18 26Q16 36 6 43Q0 40 1 36Q10 30 10 21Q10 14 3 9Q12 12 13 22Q15 12 6 0Z" fill="#ff6633" />
        </svg>
    </div>
)

const App = () => {
    return (
        <Fragment>
            <SharedDefs />
            <div className="relative flex h-screen flex-col overflow-hidden border-4 border-[#b4b8bb] bg-white font-['Open_Sans','Noto_Sans_CJK_SC',sans-serif]">
                <TitleBar />
                <MenuBar />
                <Ribbon />
                <main className="relative flex min-h-0 flex-1">
                    <Sidebar />
                    <div className="relative min-w-0 flex-1 overflow-hidden bg-white">
                        <Scene />
                        <ViewToolbar />
                        <ChainDialog />
                    </div>
                    <ChainPanel />
                </main>
                <StatusBar />
                <Watermark />
            </div>
        </Fragment>
    )
}

export default App
